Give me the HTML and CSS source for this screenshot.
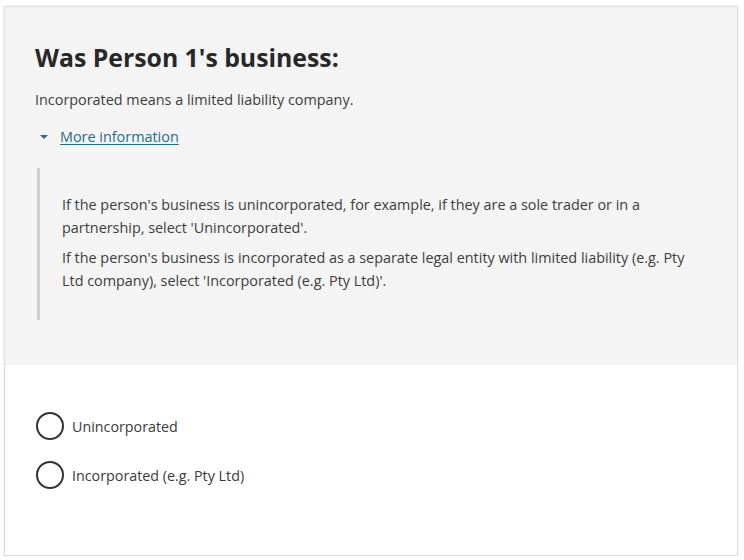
FILE: index.html
```html
<!DOCTYPE html>
<html>
  <head>
    <meta charset="utf-8" />
    <link rel="stylesheet" href="styles.css">
  </head>
  <body>
    <div class="card">
      <div class="question">
        <h1 class="title">Was Person 1's business:</h1>
        <p class="hint">Incorporated means a limited liability company.</p>
        <div class="more">
          <span class="caret"></span>
          <a class="more-link" href="#">More information</a>
        </div>
        <div class="details">
          <p>If the person's business is unincorporated, for example, if they are a sole trader or in a partnership, select 'Unincorporated'.</p>
          <p>If the person's business is incorporated as a separate legal entity with limited liability (e.g. Pty Ltd company), select 'Incorporated (e.g. Pty Ltd)'.</p>
        </div>
      </div>
      <div class="answers">
        <label class="option">
          <span class="radio"></span>
          <span class="option-text">Unincorporated</span>
        </label>
        <label class="option">
          <span class="radio"></span>
          <span class="option-text">Incorporated (e.g. Pty Ltd)</span>
        </label>
      </div>
    </div>
  </body>
</html>
```

FILE: styles.css
```css
body {
  margin: 0;
  background-color: #ffffff;
  font-family: "Open Sans", "Noto Sans", sans-serif;
  color: #3a3a3a;
}

.card {
  margin: 6px 6px 0 4px;
  height: 548px;
  border: 1px solid #dedede;
  box-shadow: 0 0 2px rgba(0, 0, 0, 0.12);
  display: flex;
  flex-direction: column;
}

.question {
  background-color: #f4f4f4;
  height: 358px;
  padding: 32px 30px 0 30px;
  box-sizing: border-box;
}

.title {
  margin: 0;
  font-size: 24.8px;
  font-weight: 700;
  line-height: 36px;
  color: #282828;
}

.hint {
  margin: 15px 0 0 0;
  font-size: 14.4px;
  line-height: 20px;
  color: #3d3d3d;
}

.more {
  margin-top: 17px;
  display: flex;
  align-items: center;
  gap: 12px;
  padding-left: 5px;
}

.caret {
  width: 0;
  height: 0;
  border-left: 4px solid transparent;
  border-right: 4px solid transparent;
  border-top: 4px solid #1d6f8c;
}

.more-link {
  font-size: 14.4px;
  line-height: 20px;
  color: #1d6f8c;
  text-decoration: underline;
  text-underline-offset: 2px;
}

.details {
  margin: 21px 0 0 2px;
  border-left: 3px solid #cfcfcf;
  padding: 25px 17px 27px 22px;
  height: 100px;
}

.details p {
  margin: 0 0 7px 0;
  font-size: 14.4px;
  line-height: 23px;
  color: #3d3d3d;
}

.answers {
  padding: 47px 30px 0 31px;
  display: flex;
  flex-direction: column;
  gap: 21px;
}

.option {
  display: flex;
  align-items: center;
  gap: 8px;
}

.radio {
  width: 24px;
  height: 24px;
  border: 2px solid #333333;
  border-radius: 50%;
}

.option-text {
  font-size: 14.3px;
  color: #3a3a3a;
}
```
